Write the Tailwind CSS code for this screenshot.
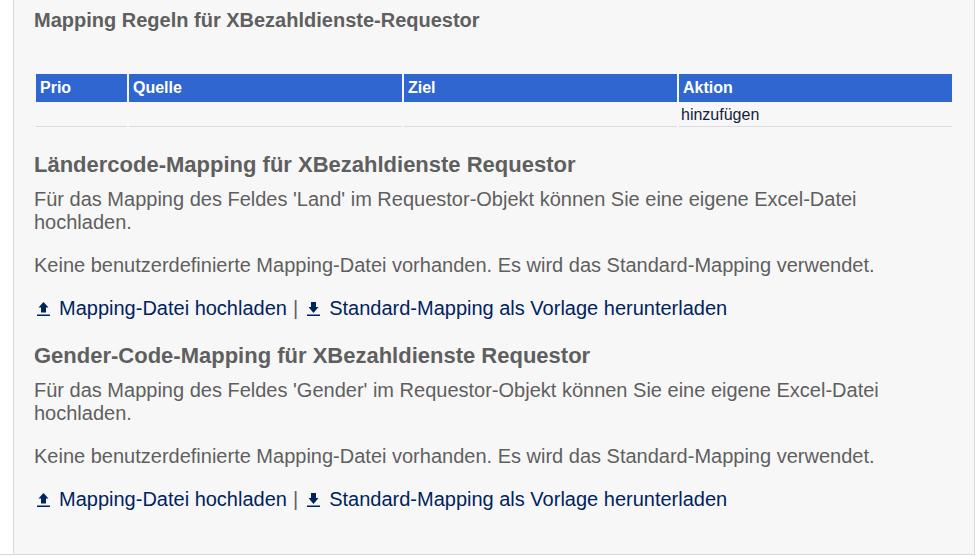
<!DOCTYPE html>
<html lang="de">
  <head>
    <meta charset="UTF-8" />
    <title>Mapping Regeln</title>
    <script src="https://cdn.jsdelivr.net/npm/@tailwindcss/browser@4"></script>
  </head>
  <body class="bg-white h-[559px] overflow-hidden font-['Liberation_Sans',Arial,sans-serif] text-[#5f5f5f]">
    <div class="w-[975px] h-[555px] border-b border-[#d9d9d9]">
      <div class="ml-[13px] h-full bg-[#f7f7f7] border-x border-[#d9d9d9] pl-5 pt-[10px]">
        <h3 class="text-[20px] leading-[20px] font-bold">Mapping Regeln für XBezahldienste-Requestor</h3>

        <table class="mt-[44px] w-[920px] table-fixed border-separate border-spacing-x-[2px] border-spacing-y-0 text-[16px]">
          <thead>
            <tr class="bg-[#2f66d0] text-white h-[28px] text-left">
              <th class="w-[91px] px-[4px] font-bold">Prio</th>
              <th class="w-[273px] px-[4px] font-bold">Quelle</th>
              <th class="w-[273px] px-[4px] font-bold">Ziel</th>
              <th class="w-[273px] px-[4px] font-bold">Aktion</th>
            </tr>
          </thead>
          <tbody>
            <tr class="h-[25px] text-[#14213d]">
              <td class="border-b border-[#dcdcdc]"></td>
              <td class="border-b border-[#dcdcdc]"></td>
              <td class="border-b border-[#dcdcdc]"></td>
              <td class="border-b border-[#dcdcdc] px-[2px] pt-[2px] leading-[22px]">hinzufügen</td>
            </tr>
          </tbody>
        </table>

        <section class="mt-[26px] w-[880px]">
          <h3 class="text-[22px] leading-[24px] font-bold">Ländercode-Mapping für XBezahldienste Requestor</h3>
          <p class="mt-[11px] text-[20px] leading-[23px]">Für das Mapping des Feldes 'Land' im Requestor-Objekt können Sie eine eigene Excel-Datei hochladen.</p>
          <p class="mt-[20px] text-[20px] leading-[23px]">Keine benutzerdefinierte Mapping-Datei vorhanden. Es wird das Standard-Mapping verwendet.</p>
          <div class="mt-[20px] flex items-center text-[20px] leading-[23px]">
            <a class="flex items-center text-[#00235f]" href="#">
              <svg class="w-[13px] h-[14px] ml-[3px] mr-[9px]" viewBox="0 0 13 14" fill="#00235f"><path d="M6.500 0 1.500 5.500H4V10.500H9V5.500H11.500zM0 12.500H13V14H0z" /></svg>
              Mapping-Datei hochladen
            </a>
            <span class="mx-[6px]">|</span>
            <a class="flex items-center text-[#00235f]" href="#">
              <svg class="w-[13px] h-[14px] ml-[3px] mr-[9px]" viewBox="0 0 13 14" fill="#00235f"><path d="M4 0H9V5H11.500L6.500 11 1.500 5H4zM0 12.500H13V14H0z" /></svg>
              Standard-Mapping als Vorlage herunterladen
            </a>
          </div>
        </section>

        <section class="mt-[24px] w-[880px]">
          <h3 class="text-[22px] leading-[24px] font-bold">Gender-Code-Mapping für XBezahldienste Requestor</h3>
          <p class="mt-[11px] text-[20px] leading-[23px]">Für das Mapping des Feldes 'Gender' im Requestor-Objekt können Sie eine eigene Excel-Datei hochladen.</p>
          <p class="mt-[20px] text-[20px] leading-[23px]">Keine benutzerdefinierte Mapping-Datei vorhanden. Es wird das Standard-Mapping verwendet.</p>
          <div class="mt-[20px] flex items-center text-[20px] leading-[23px]">
            <a class="flex items-center text-[#00235f]" href="#">
              <svg class="w-[13px] h-[14px] ml-[3px] mr-[9px]" viewBox="0 0 13 14" fill="#00235f"><path d="M6.500 0 1.500 5.500H4V10.500H9V5.500H11.500zM0 12.500H13V14H0z" /></svg>
              Mapping-Datei hochladen
            </a>
            <span class="mx-[6px]">|</span>
            <a class="flex items-center text-[#00235f]" href="#">
              <svg class="w-[13px] h-[14px] ml-[3px] mr-[9px]" viewBox="0 0 13 14" fill="#00235f"><path d="M4 0H9V5H11.500L6.500 11 1.500 5H4zM0 12.500H13V14H0z" /></svg>
              Standard-Mapping als Vorlage herunterladen
            </a>
          </div>
        </section>
      </div>
    </div>
  </body>
</html>
